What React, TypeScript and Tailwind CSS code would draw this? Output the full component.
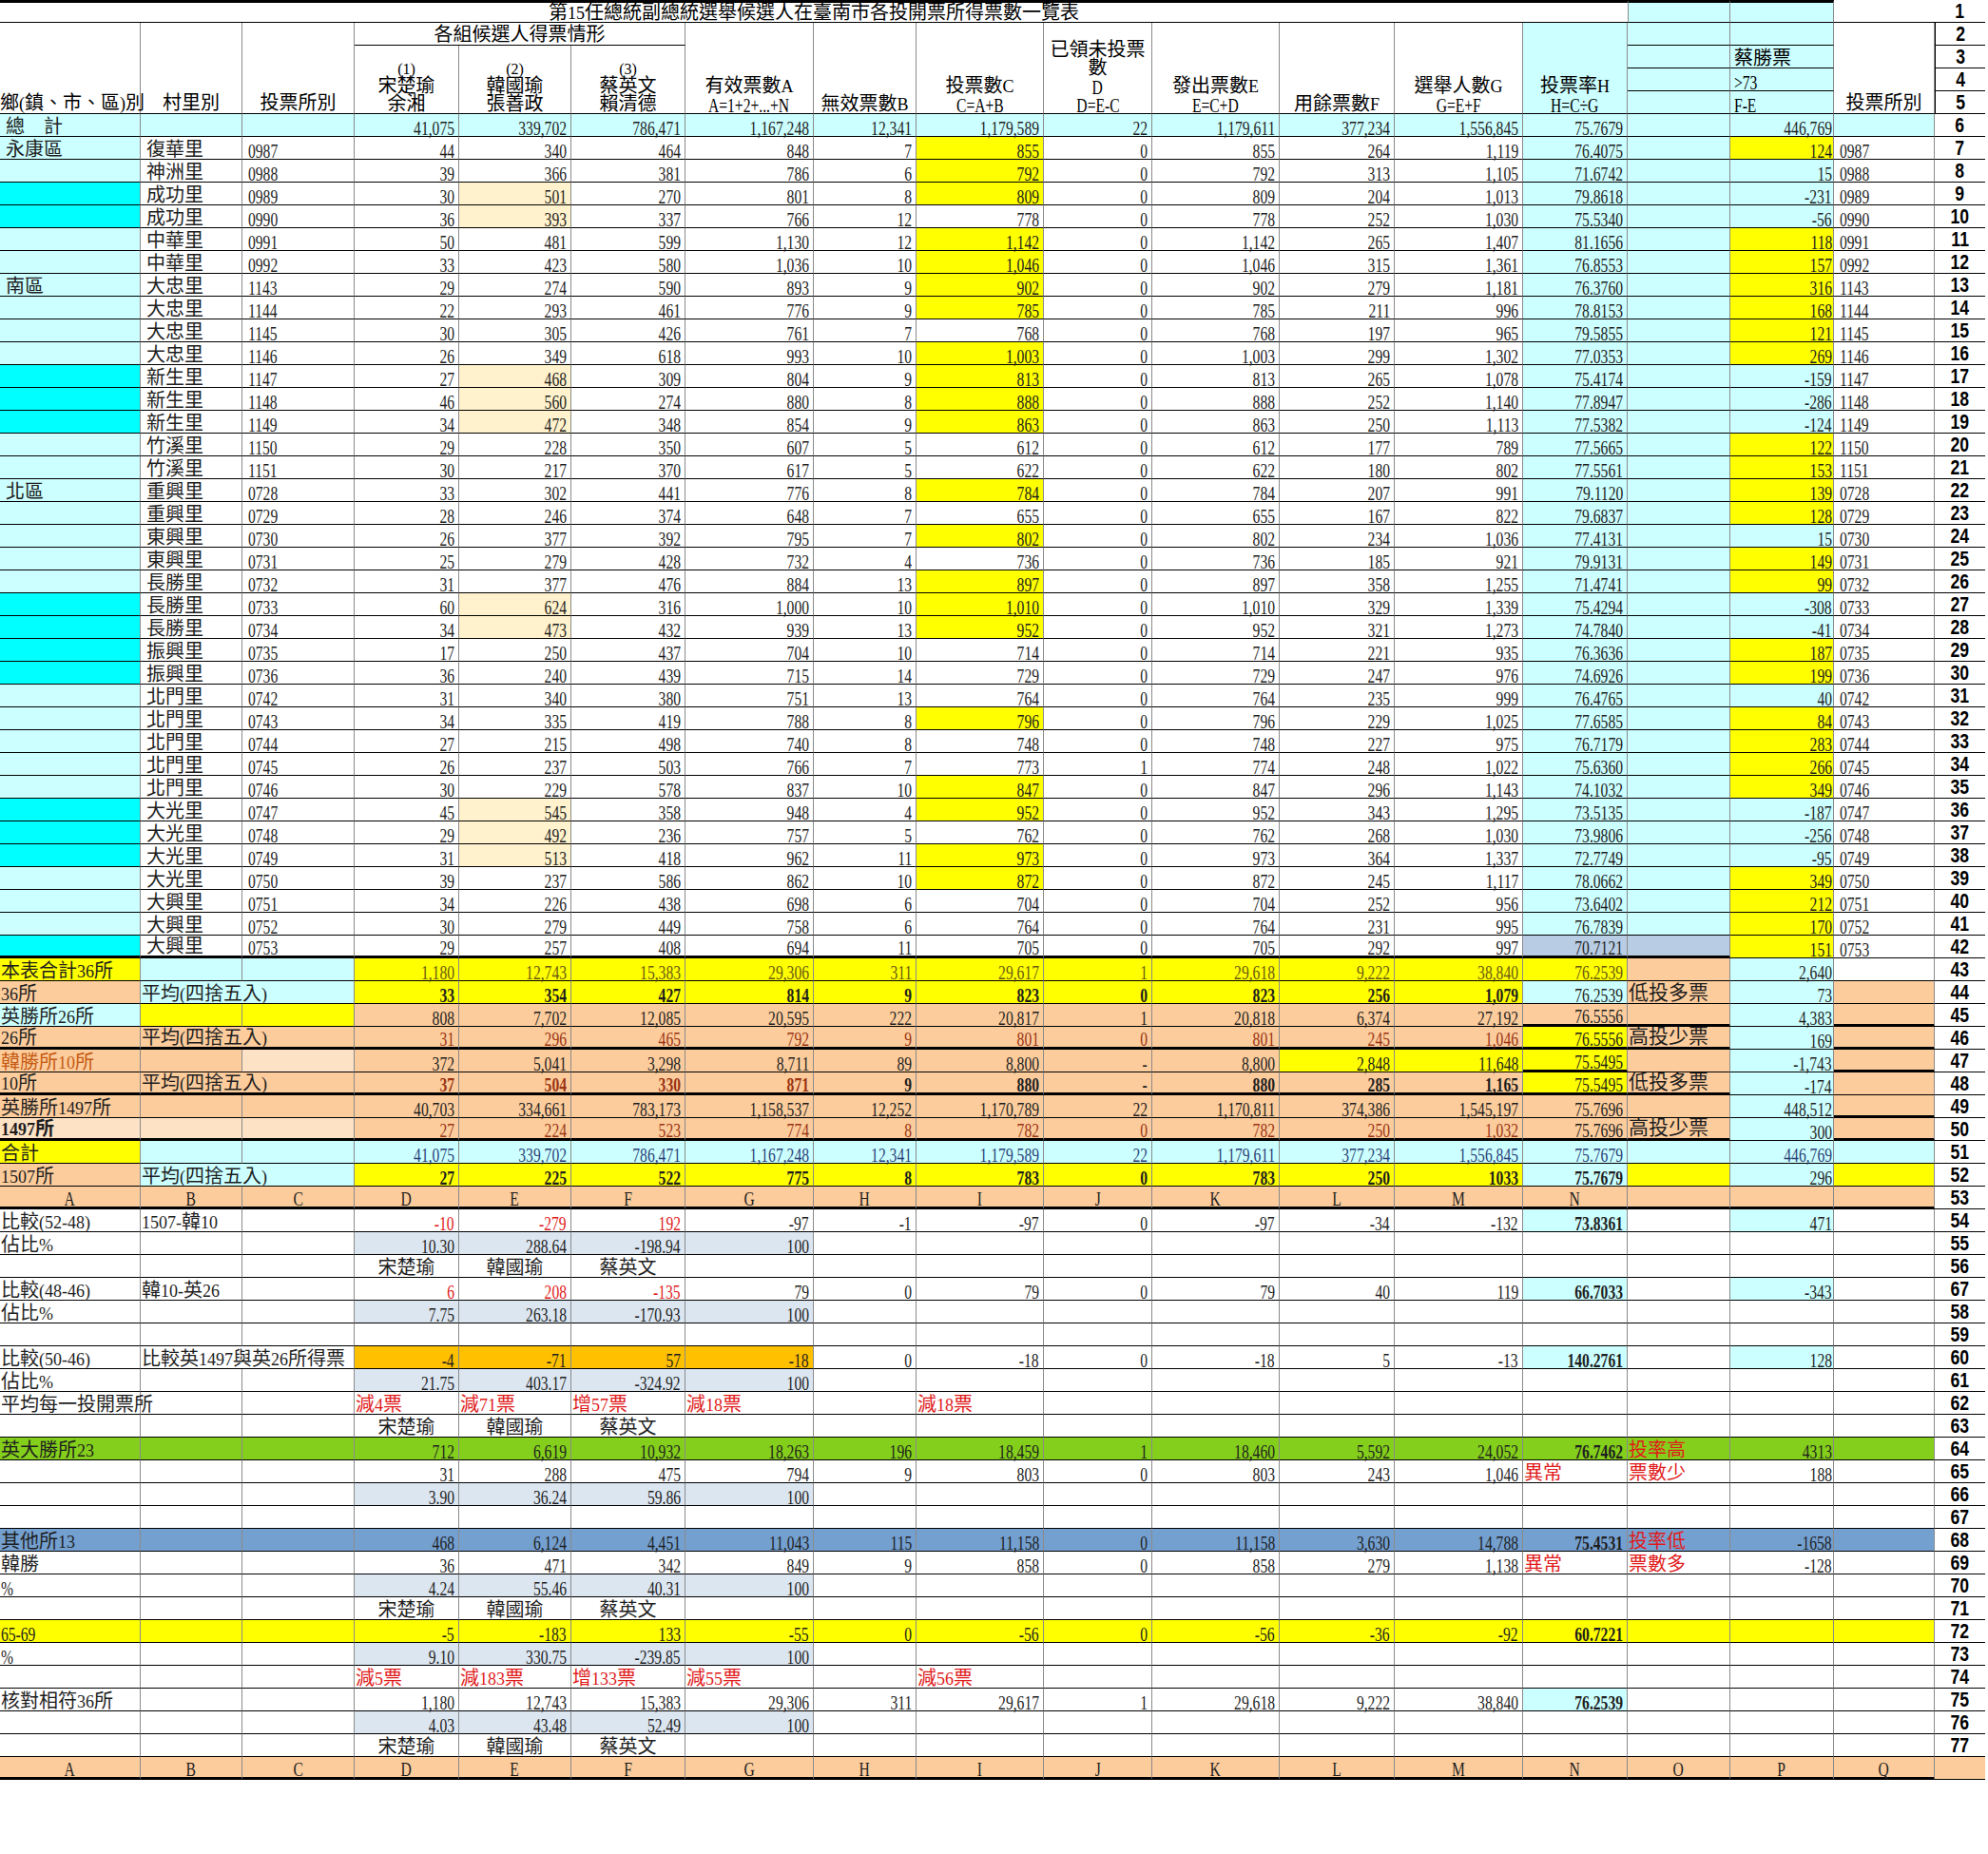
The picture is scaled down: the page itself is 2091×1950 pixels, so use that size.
import React from "react";

type Al = "l" | "r" | "c";

const COLS =
  "grid grid-cols-[148px_107px_118px_110px_118px_120px_135px_108px_134px_114px_134px_121px_135px_110px_108px_109px_106px_53px]";

const BG: Record<string, string> = {
  W: "",
  C: "bg-[#ccffff]",
  A: "bg-[#00ffff]",
  Y: "bg-[#ffff00]",
  L: "bg-[#fff2cc]",
  P: "bg-[#fccc9c]",
  Q: "bg-[#fde2c6]",
  G: "bg-[#dce6f1]",
  B: "bg-[#b8cce4]",
  O: "bg-[#ffc000]",
  N: "bg-[#84cf1c]",
  U: "bg-[#74a0d0]",
};

const FG: Record<string, string> = {
  ".": "text-[#1e1e1e]",
  r: "text-[#e01b1b]",
  b: "text-[#9a3412]",
  o: "text-[#c55a11]",
  n: "text-[#2a3f78]",
  y: "text-[#6b5a14]",
};

const CJK = /[\u3000-\u9fff\uff00-\uffef]/;

function Txt({ s, al = "l" }: { s: string; al?: Al }) {
  if (!s) return null;
  if (!CJK.test(s)) {
    const o = al === "r" ? "origin-right" : al === "c" ? "origin-center" : "origin-left";
    return <span className={`relative -mb-[2px] inline-block leading-none scale-x-[0.78] ${o}`}>{s}</span>;
  }
  const parts = s.split(/([^\u3000-\u9fff\uff00-\uffef]+)/).filter(Boolean);
  return (
    <span className="relative whitespace-nowrap leading-none">
      {parts.map((p, i) =>
        CJK.test(p) ? (
          <span key={i}>{p}</span>
        ) : (
          <span key={i} className="text-[18px]">
            {p}
          </span>
        )
      )}
    </span>
  );
}

function RN({ n, cls = "" }: { n: string; cls?: string }) {
  return (
    <div
      className={`flex items-center justify-center border-b border-b-black font-['Liberation_Sans',sans-serif] text-[22px] font-bold text-black ${cls}`}
    >
      <span className="inline-block leading-none scale-x-[0.8]">{n}</span>
    </div>
  );
}

type RowDef = {
  n: string;
  v: string[];
  bg: string;
  fg?: string;
  bold?: string;
  thick?: string;
  al?: Al;
  pad?: boolean;
  big?: boolean;
  nbg?: string;
};

function Row({ r }: { r: RowDef }) {
  const cells = [];
  for (let i = 0; i < 17; i++) {
    const v = r.v[i] ?? "";
    if (v === "<") continue;
    const span = r.v[i + 1] === "<";
    const latin = v !== "" && !CJK.test(v);
    const al: Al = r.al ?? (i <= 2 || i === 16 || !latin ? "l" : "r");
    const just = al === "r" ? "justify-end" : al === "c" ? "justify-center" : "justify-start";
    const padc =
      al === "r"
        ? i === 15
          ? "pr-px"
          : "pr-[4px]"
        : al === "l"
          ? r.pad && (i <= 2 || i === 16)
            ? "pl-[6px]"
            : "pl-px"
          : "";
    const thick = r.thick?.[i] === "x";
    const bold = r.bold?.[i] === "x";
    cells.push(
      <div
        key={i}
        className={[
          "flex h-6 items-end whitespace-nowrap border-r border-r-[#8a8a8a] border-b-black",
          thick ? "border-b-[3px]" : "border-b",
          span ? "col-span-2" : "",
          BG[r.bg[i]] ?? "",
          FG[r.fg?.[i] ?? "."] ?? FG["."],
          bold ? "font-bold" : "",
          just,
          padc,
          r.big && i === 14 ? "text-[21px]" : "",
        ].join(" ")}
      >
        <Txt s={v} al={al} />
      </div>
    );
  }
  return (
    <div className={`${COLS} h-6`}>
      {cells}
      <RN n={r.n} cls={r.nbg ?? ""} />
    </div>
  );
}

const raw = `復華里 0987 44 340 464 848 7 855 0 855 264 1,119 76.4075 124
神洲里 0988 39 366 381 786 6 792 0 792 313 1,105 71.6742 15
成功里 0989 30 501 270 801 8 809 0 809 204 1,013 79.8618 -231
成功里 0990 36 393 337 766 12 778 0 778 252 1,030 75.5340 -56
中華里 0991 50 481 599 1,130 12 1,142 0 1,142 265 1,407 81.1656 118
中華里 0992 33 423 580 1,036 10 1,046 0 1,046 315 1,361 76.8553 157
大忠里 1143 29 274 590 893 9 902 0 902 279 1,181 76.3760 316
大忠里 1144 22 293 461 776 9 785 0 785 211 996 78.8153 168
大忠里 1145 30 305 426 761 7 768 0 768 197 965 79.5855 121
大忠里 1146 26 349 618 993 10 1,003 0 1,003 299 1,302 77.0353 269
新生里 1147 27 468 309 804 9 813 0 813 265 1,078 75.4174 -159
新生里 1148 46 560 274 880 8 888 0 888 252 1,140 77.8947 -286
新生里 1149 34 472 348 854 9 863 0 863 250 1,113 77.5382 -124
竹溪里 1150 29 228 350 607 5 612 0 612 177 789 77.5665 122
竹溪里 1151 30 217 370 617 5 622 0 622 180 802 77.5561 153
重興里 0728 33 302 441 776 8 784 0 784 207 991 79.1120 139
重興里 0729 28 246 374 648 7 655 0 655 167 822 79.6837 128
東興里 0730 26 377 392 795 7 802 0 802 234 1,036 77.4131 15
東興里 0731 25 279 428 732 4 736 0 736 185 921 79.9131 149
長勝里 0732 31 377 476 884 13 897 0 897 358 1,255 71.4741 99
長勝里 0733 60 624 316 1,000 10 1,010 0 1,010 329 1,339 75.4294 -308
長勝里 0734 34 473 432 939 13 952 0 952 321 1,273 74.7840 -41
振興里 0735 17 250 437 704 10 714 0 714 221 935 76.3636 187
振興里 0736 36 240 439 715 14 729 0 729 247 976 74.6926 199
北門里 0742 31 340 380 751 13 764 0 764 235 999 76.4765 40
北門里 0743 34 335 419 788 8 796 0 796 229 1,025 77.6585 84
北門里 0744 27 215 498 740 8 748 0 748 227 975 76.7179 283
北門里 0745 26 237 503 766 7 773 1 774 248 1,022 75.6360 266
北門里 0746 30 229 578 837 10 847 0 847 296 1,143 74.1032 349
大光里 0747 45 545 358 948 4 952 0 952 343 1,295 73.5135 -187
大光里 0748 29 492 236 757 5 762 0 762 268 1,030 73.9806 -256
大光里 0749 31 513 418 962 11 973 0 973 364 1,337 72.7749 -95
大光里 0750 39 237 586 862 10 872 0 872 245 1,117 78.0662 349
大興里 0751 34 226 438 698 6 704 0 704 252 956 73.6402 212
大興里 0752 30 279 449 758 6 764 0 764 231 995 76.7839 170
大興里 0753 29 257 408 694 11 705 0 705 292 997 70.7121 151`;

const AREA: Record<number, string> = { 7: "永康區", 13: "南區", 22: "北區" };
const AQUA = [9, 10, 17, 18, 19, 27, 28, 29, 30, 36, 37, 38, 42];
const IYEL = [7, 8, 9, 11, 12, 13, 14, 16, 17, 18, 19, 22, 24, 26, 27, 28, 32, 35, 36, 38, 39];
const num = (s: string) => Number(s.replace(/,/g, ""));

const dataRows: RowDef[] = raw.split("\n").map((line, idx) => {
  const t = line.trim().split(/\s+/);
  const n = idx + 7;
  const [b, c, d, e, f, g, h, i, j, k, l, m, nn, p] = t;
  const last = n === 42;
  const bg = [
    AQUA.includes(n) ? "A" : "C",
    "W",
    "W",
    "W",
    num(e) > num(f) ? "L" : "W",
    "W",
    "W",
    "W",
    IYEL.includes(n) ? "Y" : "W",
    "W",
    "W",
    "W",
    "W",
    last ? "B" : "C",
    last ? "B" : "C",
    num(p) > 73 ? "Y" : "C",
    "W",
  ].join("");
  return {
    n: String(n),
    v: [AREA[n] ?? "", b, c, d, e, f, g, h, i, j, k, l, m, nn, "", p, c],
    bg,
    pad: true,
    thick: last ? "xxxxxxxxxxxxxxx.." : undefined,
  };
});

const F = (n: string, vals: string, bg: string, o: Partial<RowDef> = {}): RowDef => {
  const v = vals.split("|");
  while (v.length < 17) v.push("");
  return { n, v, bg, ...o };
};

const W17 = "WWWWWWWWWWWWWWWWW";
const GREY = "WWWGGGGWWWWWWWWWW";
const NAMES = "|||宋楚瑜|韓國瑜|蔡英文";
const BN = ".............x...";

const rows: RowDef[] = [
  F(
    "6",
    "總　計|||41,075|339,702|786,471|1,167,248|12,341|1,179,589|22|1,179,611|377,234|1,556,845|75.7679||446,769|",
    "CCCCCCCCCCCCCCCCC",
    { pad: true }
  ),
  ...dataRows,
  F(
    "43",
    "本表合計36所|||1,180|12,743|15,383|29,306|311|29,617|1|29,618|9,222|38,840|76.2539||2,640|",
    "YCCYYYYYYYYYYYPCW",
    { fg: "...yyyyyyyyyyy..." }
  ),
  F(
    "44",
    "36所|平均(四捨五入)|<|33|354|427|814|9|823|0|823|256|1,079|76.2539|低投多票|73|",
    "PCCYYYYYYYYYYCPCP",
    { bold: "...xxxxxxxxxx....", big: true }
  ),
  F(
    "45",
    "英勝所26所|||808|7,702|12,085|20,595|222|20,817|1|20,818|6,374|27,192|76.5556||4,383|",
    "CYYPPPPPPPPPPPPCP",
    { thick: ".............xx.x" }
  ),
  F(
    "46",
    "26所|平均(四捨五入)|<|31|296|465|792|9|801|0|801|245|1,046|76.5556|高投少票|169|",
    "PPPPPPPPPPPPPYPCP",
    { fg: "...bbbbbbbbbb....", thick: "xxxxxxxxxxxxxxx.x", big: true }
  ),
  F(
    "47",
    "韓勝所10所|||372|5,041|3,298|8,711|89|8,800|-|8,800|2,848|11,648|75.5495||-1,743|",
    "PPQPPPPPPPPYYYPCP",
    { fg: "o................", thick: ".............x..x" }
  ),
  F(
    "48",
    "10所|平均(四捨五入)|<|37|504|330|871|9|880|-|880|285|1,165|75.5495|低投多票|-174|",
    "PPPPPPPPPPPPPYPCP",
    { fg: "...bbbb..........", bold: "...xxxxxxxxxx....", thick: "xxxxxxxxxxxxxxx..", big: true }
  ),
  F(
    "49",
    "英勝所1497所|||40,703|334,661|783,173|1,158,537|12,252|1,170,789|22|1,170,811|374,386|1,545,197|75.7696||448,512|",
    "PPPPPPPPPPPPPPPCP",
    { thick: "................x" }
  ),
  F(
    "50",
    "1497所|||27|224|523|774|8|782|0|782|250|1,032|75.7696|高投少票|300|",
    "QQQPPPPPPPPPPPPCP",
    { fg: "...bbbbbbbbbb....", bold: "x................", thick: "xxxxxxxxxxxxxxx.x", big: true }
  ),
  F(
    "51",
    "合計|||41,075|339,702|786,471|1,167,248|12,341|1,179,589|22|1,179,611|377,234|1,556,845|75.7679||446,769|",
    "YCCCCCCCCCCCCCCCC",
    { fg: "...nnnnnnnnnnn.n." }
  ),
  F(
    "52",
    "1507所|平均(四捨五入)|<|27|225|522|775|8|783|0|783|250|1033|75.7679||296|",
    "PCCYYYYYYYYYYCYCY",
    { bold: "...xxxxxxxxxxx..." }
  ),
  F("53", "A|B|C|D|E|F|G|H|I|J|K|L|M|N", "PPPPPPPPPPPPPPPPP", { al: "c", thick: "xxxxxxxxxxxxxxxxx" }),
  F(
    "54",
    "比較(52-48)|1507-韓10||-10|-279|192|-97|-1|-97|0|-97|-34|-132|73.8361||471|",
    "WWWWWWWWWWWWWCWCW",
    { fg: "...rrr...........", bold: BN }
  ),
  F("55", "佔比%|||10.30|288.64|-198.94|100", GREY),
  F("56", NAMES, W17, { al: "c" }),
  F(
    "67",
    "比較(48-46)|韓10-英26||6|208|-135|79|0|79|0|79|40|119|66.7033||-343|",
    "WWWWWWWWWWWWWCWCW",
    { fg: "...rrr...........", bold: BN }
  ),
  F("58", "佔比%|||7.75|263.18|-170.93|100", GREY),
  F("59", "", W17),
  F(
    "60",
    "比較(50-46)|比較英1497與英26所得票|<|-4|-71|57|-18|0|-18|0|-18|5|-13|140.2761||128|",
    "WWWOOOOWWWWWWCWCW",
    { bold: BN }
  ),
  F("61", "佔比%|||21.75|403.17|-324.92|100", GREY),
  F("62", "平均每一投開票所|||減4票|減71票|增57票|減18票||減18票", W17, { fg: "...rrrrrr........" }),
  F("63", NAMES, W17, { al: "c" }),
  F(
    "64",
    "英大勝所23|||712|6,619|10,932|18,263|196|18,459|1|18,460|5,592|24,052|76.7462|投率高|4313|",
    "NNNNNNNNNNNNNNNNN",
    { fg: "..............r..", bold: BN }
  ),
  F("65", "|||31|288|475|794|9|803|0|803|243|1,046|異常|票數少|188|", W17, { fg: ".............rr.." }),
  F("66", "|||3.90|36.24|59.86|100", GREY),
  F("67", "", W17),
  F(
    "68",
    "其他所13|||468|6,124|4,451|11,043|115|11,158|0|11,158|3,630|14,788|75.4531|投率低|-1658|",
    "UUUUUUUUUUUUUUUUU",
    { fg: "..............r..", bold: BN }
  ),
  F("69", "韓勝|||36|471|342|849|9|858|0|858|279|1,138|異常|票數多|-128|", W17, { fg: ".............rr.." }),
  F("70", "%|||4.24|55.46|40.31|100", GREY),
  F("71", NAMES, W17, { al: "c" }),
  F("72", "65-69|||-5|-183|133|-55|0|-56|0|-56|-36|-92|60.7221", "YYYYYYYYYYYYYYYYY", { bold: BN }),
  F("73", "%|||9.10|330.75|-239.85|100", GREY),
  F("74", "|||減5票|減183票|增133票|減55票||減56票", W17, { fg: "...rrrrrr........" }),
  F(
    "75",
    "核對相符36所|||1,180|12,743|15,383|29,306|311|29,617|1|29,618|9,222|38,840|76.2539",
    "WWWWWWWWWWWWWCWWW",
    { bold: BN }
  ),
  F("76", "|||4.03|43.48|52.49|100", GREY),
  F("77", NAMES, W17, { al: "c" }),
  F("", "A|B|C|D|E|F|G|H|I|J|K|L|M|N|O|P|Q", "PPPPPPPPPPPPPPPPP", {
    al: "c",
    thick: "xxxxxxxxxxxxxxxxx",
    nbg: "bg-[#fccc9c]",
  }),
];

function Stack({ pos, lines, bg = "" }: { pos: string; lines: string[]; bg?: string }) {
  return (
    <div
      className={`${pos} flex flex-col items-center justify-end whitespace-nowrap border-b border-r border-b-black border-r-[#8a8a8a] ${bg}`}
    >
      {lines.map((l, i) => (
        <div key={i} className="flex h-[19px] items-end justify-center leading-none whitespace-nowrap">
          {/^\(\d\)$/.test(l) ? <span className="text-[16px]">{l}</span> : <Txt s={l} al="c" />}
        </div>
      ))}
    </div>
  );
}

function Header() {
  const H = "flex whitespace-nowrap border-b border-r border-b-black border-r-[#8a8a8a]";
  return (
    <>
      <div className={`${COLS} h-6`}>
        <div className="col-span-14 flex items-end justify-center whitespace-nowrap border-t-[3px] border-b border-t-black border-b-black">
          <Txt s="第15任總統副總統選舉候選人在臺南市各投開票所得票數一覽表" />
        </div>
        <div className="border-t-[3px] border-b border-r border-l border-t-black border-b-black border-r-[#8a8a8a] border-l-[#8a8a8a] bg-[#ccffff]" />
        <div className="border-t-[3px] border-b border-r border-t-black border-b-black border-r-[#8a8a8a] bg-[#ccffff]" />
        <div className="border-b border-b-black" />
        <RN n="1" />
      </div>
      <div className={`${COLS} grid-rows-[repeat(4,24px)]`}>
        <div className={`col-start-1 row-start-1 row-span-4 items-end pb-px ${H}`}>
          <Txt s="鄉(鎮、市、區)別" />
        </div>
        <div className={`col-start-2 row-start-1 row-span-4 items-end justify-center pb-px ${H}`}>
          <Txt s="村里別" />
        </div>
        <div className={`col-start-3 row-start-1 row-span-4 items-end justify-center pb-px ${H}`}>
          <Txt s="投票所別" />
        </div>
        <div className={`col-start-4 col-span-3 row-start-1 items-center justify-center ${H}`}>
          <Txt s="各組候選人得票情形" />
        </div>
        <Stack pos="col-start-4 row-start-2 row-span-3" lines={["(1)", "宋楚瑜", "余湘"]} />
        <Stack pos="col-start-5 row-start-2 row-span-3" lines={["(2)", "韓國瑜", "張善政"]} />
        <Stack pos="col-start-6 row-start-2 row-span-3" lines={["(3)", "蔡英文", "賴清德"]} />
        <Stack pos="col-start-7 row-start-1 row-span-4" lines={["有效票數A", "A=1+2+...+N"]} />
        <Stack pos="col-start-8 row-start-1 row-span-4" lines={["無效票數B"]} />
        <Stack pos="col-start-9 row-start-1 row-span-4" lines={["投票數C", "C=A+B"]} />
        <Stack pos="col-start-10 row-start-1 row-span-4" lines={["已領未投票", "數", "D", "D=E-C"]} />
        <Stack pos="col-start-11 row-start-1 row-span-4" lines={["發出票數E", "E=C+D"]} />
        <Stack pos="col-start-12 row-start-1 row-span-4" lines={["用餘票數F"]} />
        <Stack pos="col-start-13 row-start-1 row-span-4" lines={["選舉人數G", "G=E+F"]} />
        <Stack pos="col-start-14 row-start-1 row-span-4" lines={["投票率H", "H=C÷G"]} bg="bg-[#ccffff]" />
        <div className={`col-start-15 row-start-1 ${H} bg-[#ccffff]`} />
        <div className={`col-start-15 row-start-2 ${H} bg-[#ccffff]`} />
        <div className={`col-start-15 row-start-3 ${H} bg-[#ccffff]`} />
        <div className={`col-start-15 row-start-4 ${H} bg-[#ccffff]`} />
        <div className={`col-start-16 row-start-1 ${H} bg-[#ccffff]`} />
        <div className={`col-start-16 row-start-2 items-end pl-[4px] ${H} bg-[#ccffff]`}>
          <Txt s="蔡勝票" />
        </div>
        <div className={`col-start-16 row-start-3 items-end pl-[4px] ${H} bg-[#ccffff]`}>
          <Txt s=">73" />
        </div>
        <div className={`col-start-16 row-start-4 items-end pl-[4px] ${H} bg-[#ccffff]`}>
          <Txt s="F-E" />
        </div>
        <div className={`col-start-17 row-start-1 row-span-4 items-end justify-center pb-px ${H}`}>
          <Txt s="投票所別" />
        </div>
        <RN n="2" cls="col-start-18 row-start-1 border-l border-l-black" />
        <RN n="3" cls="col-start-18 row-start-2 border-l border-l-black" />
        <RN n="4" cls="col-start-18 row-start-3 border-l border-l-black" />
        <RN n="5" cls="col-start-18 row-start-4 border-l border-l-black" />
      </div>
    </>
  );
}

export default function App() {
  return (
    <div className="min-h-[1950px] w-[2091px] bg-white font-['Liberation_Serif','Noto_Sans_CJK_TC',serif] text-[20px] text-black">
      <Header />
      {rows.map((r, i) => (
        <Row key={i} r={r} />
      ))}
    </div>
  );
}
